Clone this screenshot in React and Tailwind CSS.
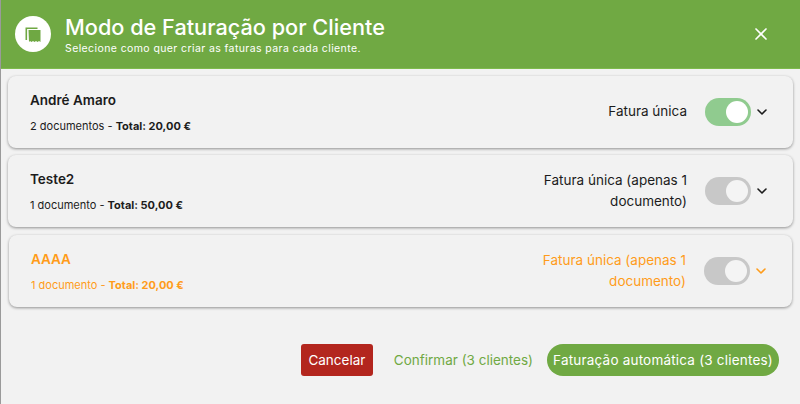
import React from "react";
import { X, ChevronDown } from "lucide-react";

const clients = [
  { name: "André Amaro", docs: "2 documentos", total: "20,00 €", label: "Fatura única", on: true },
  { name: "Teste2", docs: "1 documento", total: "50,00 €", label: "Fatura única (apenas 1 documento)" },
  { name: "AAAA", docs: "1 documento", total: "20,00 €", label: "Fatura única (apenas 1 documento)", warn: true },
];

const ReceiptIcon = () => (
  <svg width="20" height="20" viewBox="0 0 20 20" fill="#6fa843">
    <path d="M2.5 3.5h12v1.6H4.1V16H2.5z" />
    <path d="M5.5 6h12v12l-1.5-1-1.5 1-1.5-1-1.5 1-1.5-1-1.5 1-1.5-1-1 1z" />
  </svg>
);

const ClientCard = ({ client }) => {
  const color = client.warn ? "mx-px text-[#ff9c1a]" : "text-[#1c1c1c]";
  return (
    <div className={`flex h-[72.3px] items-center justify-between rounded-lg bg-[#f2f2f2] pl-[22px] pr-[23px] shadow-[0_1px_3px_rgba(0,0,0,0.4)] ${color}`}>
      <div className="pt-[2px]">
        <div className="text-[13.5px] font-semibold leading-5">{client.name}</div>
        <div className="mt-[6px] text-[11px] leading-5">
          {client.docs} - <span className="font-bold">Total: {client.total}</span>
        </div>
      </div>
      <div className="flex items-center">
        <div className="w-[175px] text-right text-[13.5px] leading-[21px]">{client.label}</div>
        <div className={`ml-[18px] flex h-[28px] w-[46px] items-center justify-end rounded-full pr-[3px] ${client.on ? "bg-[#90cb8f]" : "bg-[#c8c8c8]"}`}>
          <div className={`size-[22px] rounded-full ${client.on ? "bg-white" : "bg-[#f4f4f4]"}`} />
        </div>
        <ChevronDown className="ml-[3px]" size={16} strokeWidth={2.4} />
      </div>
    </div>
  );
};

export default function App() {
  return (
    <div className="flex h-[404px] w-[800px] overflow-hidden bg-[#9a9a9a] pl-px font-['Inter',sans-serif]">
      <div className="flex flex-1 flex-col bg-[#f2f2f2]">
        <div className="flex h-[69px] shrink-0 items-center border-b border-[#7dba4c] bg-[#70a943] pl-[14px] pr-[29px] text-white">
          <div className="flex size-9 items-center justify-center rounded-full bg-white">
            <ReceiptIcon />
          </div>
          <div className="ml-[14px] flex-1">
            <div className="text-[21.7px] font-medium leading-[28px]">Modo de Faturação por Cliente</div>
            <div className="mt-px text-[10.5px] leading-[14px] tracking-[0.4px]">Selecione como quer criar as faturas para cada cliente.</div>
          </div>
          <X size={20} strokeWidth={2} />
        </div>

        <div className="flex flex-col gap-[7.4px] px-[7px] pt-[6.5px]">
          {clients.map((c) => (
            <ClientCard key={c.name} client={c} />
          ))}
        </div>

        <div className="mt-[37px] flex items-center justify-end pr-[21px] text-[13.5px]">
          <button className="h-[32px] w-[72px] rounded-[3px] bg-[#b3261e] text-white">Cancelar</button>
          <button className="ml-[21px] text-[#70a943]">Confirmar (3 clientes)</button>
          <button className="ml-[14px] h-[32px] w-[232px] rounded-full bg-[#70a943] tracking-[0.2px] text-white">Faturação automática (3 clientes)</button>
        </div>
      </div>
    </div>
  );
}
